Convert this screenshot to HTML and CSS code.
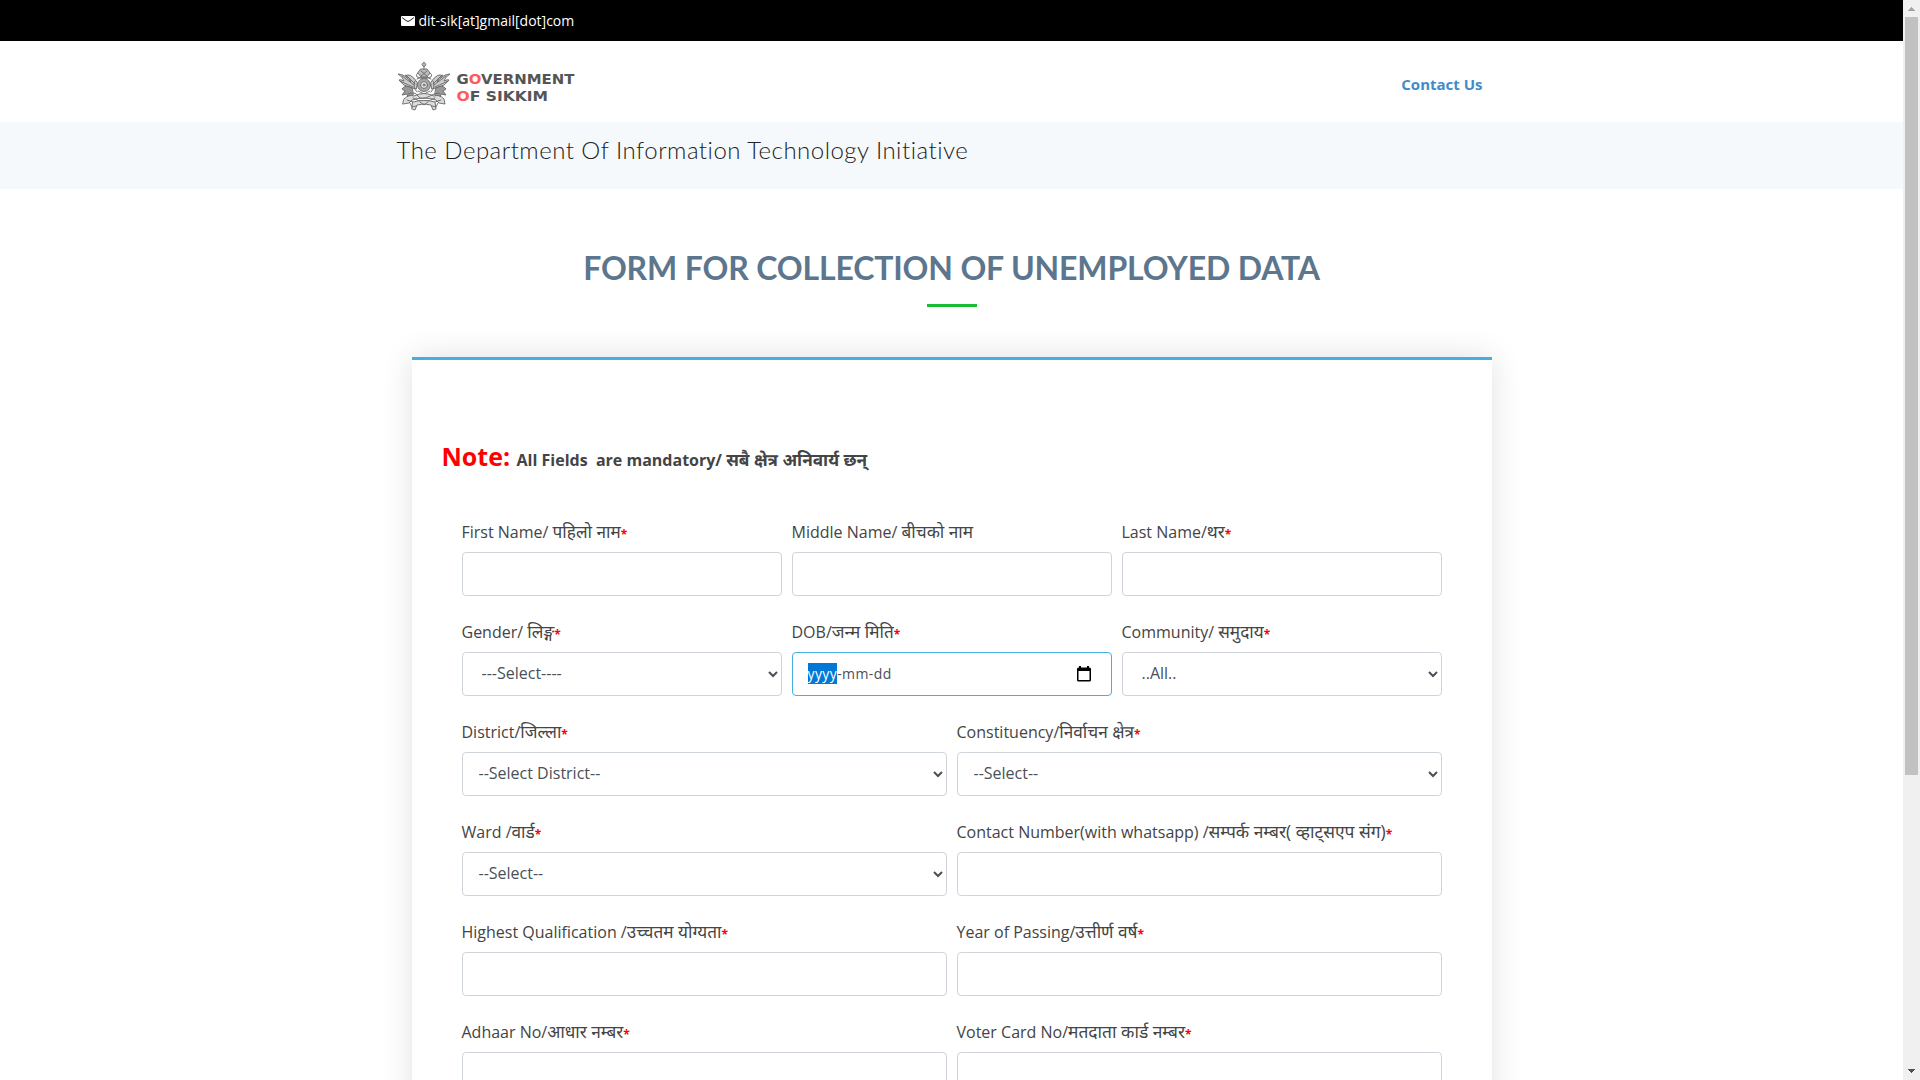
FILE: index.html
```
<!DOCTYPE html>
<html lang="en">
<head>
<meta charset="utf-8">
<title>Form for Collection of Unemployed Data</title>
<link rel="stylesheet" href="styles.css">
</head>
<body>
<div class="page">
  <div class="topbar"><div class="container topbar-inner">
    <svg class="mail" width="14" height="10" viewBox="0 0 14 10"><rect width="14" height="10" rx="1" fill="#fff"/><path d="M1 1.500Q6 5.500 7 5.500T13 1.500" fill="none" stroke="#222" stroke-width="1"/></svg>
    <span class="email">dit-sik[at]gmail[dot]com</span>
  </div></div>
  <header class="header"><div class="container header-inner">
    <svg class="logo" width="180" height="50" viewBox="0 0 180 50">
      <g fill="none" stroke="#666" stroke-width="0.9" stroke-linecap="round">
        <path fill="#bbb" d="M27 1.500a1.800 2 0 1 1-.1 0M27 5v3M24 8h6l3 4-3 4h-6l-3-4z"/>
        <path d="M21 12q-3 1-1 4l7 2 7-2q2-3-1-4M24 10l6 5M30 10l-6 5"/>
        <path fill="#ccc" d="M20 21Q13 11 8 15q5 1 6 6Q8 13 1 13q5 3 6 7-4-2-5-1 4 6 10 7l7 2z"/>
        <path fill="#ccc" d="M34 21q7-10 12-6-5 1-6 6 6-8 13-8-5 3-6 7 4-2 5-1-4 6-10 7l-7 2z"/>
        <path d="M5 15l12 9M9 14l9 9M3 20l13 6M49 15l-12 9M45 14l-9 9M51 20l-13 6"/>
        <circle cx="27" cy="24" r="6.500" fill="#aaa"/><circle cx="27" cy="24" r="3.500" fill="#ddd"/><circle cx="27" cy="24" r="1"/>
        <path d="M20 18q7-4 14 0M18 20q-3 6 2 11M36 20q3 6-2 11M21 30l6 3 6-3"/>
        <path fill="#999" d="M15 27q-7-4-10 1l3 2-3 4 5-1 1 4 5-3zM39 27q7-4 10 1l-3 2 3 4-5-1-1 4-5-3z"/>
        <path fill="#ddd" d="M7 38q5-5 10-3 10-5 20 0 5-2 10 3l1 5-6-1-3-3q-12-4-24 0l-3 3-6 1z"/>
        <path d="M11 33q7-3 10 2t12 0 10-2M10 39l6 2M44 39l-6 2M16 37q11 7 22 0"/>
        <path fill="#ddd" d="M16 41q11-3 22 0l1 7-3 1-2-5q-7-2-14 0l-2 5-3-1z"/>
        <path d="M13 42l2 4 4-1M41 42l-2 4-4-1M23 41l4 3 4-3"/>
      </g>
      <g class="logo-text" fill="#555">
        <text x="59.500" y="23" textLength="118" lengthAdjust="spacingAndGlyphs"><tspan>G</tspan><tspan fill="#ff5b5b">O</tspan><tspan>VERNMENT</tspan></text>
        <text x="59.500" y="40" textLength="91.500" lengthAdjust="spacingAndGlyphs"><tspan fill="#ff5b5b">O</tspan><tspan>F SIKKIM</tspan></text>
      </g>
    </svg>
    <a class="contact">Contact Us</a>
  </div></header>
  <div class="band"><div class="container"><h1 class="band-title">The Department Of Information Technology Initiative</h1></div></div>
  <main class="main">
    <h2 class="title">FORM FOR COLLECTION OF UNEMPLOYED DATA</h2>
    <div class="rule"></div>
    <form class="card">
      <p class="note"><span class="note-head">Note:</span><span>All Fields &nbsp;are mandatory/ <span class="ne">सबै क्षेत्र अनिवार्य छन्</span></span></p>
      <div class="row three">
        <div class="field"><label>First Name/ <span class="ne">पहिलो नाम</span><b>*</b></label><input class="control"></div>
        <div class="field"><label>Middle Name/ <span class="ne">बीचको नाम</span></label><input class="control"></div>
        <div class="field"><label>Last Name/<span class="ne">थर</span><b>*</b></label><input class="control"></div>
      </div>
      <div class="row three">
        <div class="field"><label>Gender/ <span class="ne">लिङ्ग</span><b>*</b></label><select class="control indented"><option>---Select----</option></select></div>
        <div class="field"><label>DOB/<span class="ne">जन्म मिति</span><b>*</b></label>
          <div class="control date"><span class="year">yyyy</span><span class="rest">-mm-dd</span>
            <svg class="calendar" width="14" height="16" viewBox="0 0 14 16"><path fill-rule="evenodd" d="M2 0h2v1.500h6V0h2v1.500h.5A1.500 1.500 0 0 1 14 3v11a1.500 1.500 0 0 1-1.500 1.500h-11A1.500 1.500 0 0 1 0 14V3a1.500 1.500 0 0 1 1.500-1.500H2zM1.500 5v9h11V5z"/></svg>
          </div></div>
        <div class="field"><label>Community/ <span class="ne">समुदाय</span><b>*</b></label><select class="control indented"><option>..All..</option></select></div>
      </div>
      <div class="row two">
        <div class="field"><label>District/<span class="ne">जिल्ला</span><b>*</b></label><select class="control"><option>--Select District--</option></select></div>
        <div class="field"><label>Constituency/<span class="ne">निर्वाचन क्षेत्र</span><b>*</b></label><select class="control"><option>--Select--</option></select></div>
      </div>
      <div class="row two">
        <div class="field"><label>Ward /<span class="ne">वार्ड</span><b>*</b></label><select class="control"><option>--Select--</option></select></div>
        <div class="field"><label>Contact Number(with whatsapp) /<span class="ne wide">सम्पर्क नम्बर( व्हाट्सएप संग)</span><b>*</b></label><input class="control"></div>
      </div>
      <div class="row two">
        <div class="field"><label>Highest Qualification /<span class="ne">उच्चतम योग्यता</span><b>*</b></label><input class="control"></div>
        <div class="field"><label>Year of Passing/<span class="ne">उत्तीर्ण वर्ष</span><b>*</b></label><input class="control"></div>
      </div>
      <div class="row two">
        <div class="field"><label>Adhaar No/<span class="ne">आधार नम्बर</span><b>*</b></label><input class="control"></div>
        <div class="field"><label>Voter Card No/<span class="ne wide">मतदाता कार्ड नम्बर</span><b>*</b></label><input class="control"></div>
      </div>
    </form>
  </main>
</div>
<div class="scrollbar">
  <svg width="17" height="17" viewBox="0 0 17 17" shape-rendering="crispEdges"><path d="M5 11h7L8.500 7z" fill="#a3a3a3"/></svg>
  <div class="thumb"></div>
  <svg width="17" height="17" viewBox="0 0 17 17" shape-rendering="crispEdges"><path d="M5 6h7L8.500 10z" fill="#505050"/></svg>
</div>
</body>
</html>
```
FILE: styles.css
```
* { box-sizing: border-box; }
body {
  margin: 0;
  display: flex;
  height: 1080px;
  overflow: hidden;
  background: #fff;
  color: #444;
  font: 16px/24px "Open Sans", "Noto Sans Devanagari", "Noto Sans", sans-serif;
}
.page { width: 1903px; height: 1080px; overflow: hidden; }
.container { width: 1140px; margin: 0 auto; padding: 0 15px; }
.topbar { height: 41px; background: #000; color: #fff; }
.topbar-inner { display: flex; align-items: center; height: 41px; gap: 4px; padding-left: 19px; }
.email { font-size: 14px; }
.header { height: 81px; }
.header-inner { display: flex; justify-content: space-between; align-items: flex-start; padding-top: 20px; }
.logo-text { font: bold 14.6px "DejaVu Sans", sans-serif; }
.contact { margin: 11px 24px 0 0; color: #428bca; font-size: 15px; font-weight: 700; }
.band { height: 67px; padding-top: 12px; background: #f5f9fc; }
.band-title { margin: 0; font: 300 24px/32px Lato, sans-serif; letter-spacing: 0.48px; color: #222; white-space: nowrap; }
.main { padding: 58px 0 0; }
.title { margin: 0; font: 700 32px/41px Lato, sans-serif; letter-spacing: -0.15px; color: #5c768d; text-align: center; white-space: nowrap; }
.rule { width: 50px; height: 3px; margin: 16px auto 0; background: #1bbd36; }
.card {
  width: 1080px;
  height: 900px;
  margin: 50px auto 0;
  padding: 80px 50px 0;
  border-top: 3px solid #47aee4;
  background: #fff;
  box-shadow: 0 0 30px rgba(0, 0, 0, 0.12);
}
.note { display: flex; align-items: baseline; gap: 6.5px; height: 80px; margin: 0 0 0 -20px; font-weight: 700; line-height: 32px; white-space: nowrap; }
.note-head { color: #f00; font-size: 25px; }
.ne { font-size: 17.2px; line-height: 0; }
.wide { font-size: 17.4px; }
.row { display: grid; column-gap: 10px; height: 100px; }
.three { grid-template-columns: repeat(3, 1fr); }
.two { grid-template-columns: repeat(2, 1fr); }
.field { min-width: 0; }
label { display: block; height: 32px; white-space: nowrap; }
label b { color: #f00; font-size: 12px; line-height: 0; vertical-align: -1px; }
.control {
  display: block;
  width: 100%;
  height: 44px;
  padding: 6px 12px;
  border: 1px solid #ced4da;
  border-radius: 4px;
  background: #fff;
  color: #495057;
  font: 16px/24px "Open Sans", sans-serif;
}
select.control { padding: 5px 13px 7px 12px; }
select.indented { padding-left: 15px; }
.date { display: flex; align-items: center; padding: 0 20px 1px 15px; border-color: #47aee4; font-size: 14px; line-height: 21px; letter-spacing: 0.4px; }
.year { background: #0078d7; color: #fff; }
.calendar { margin-left: auto; }
.scrollbar { display: flex; flex-direction: column; width: 17px; height: 1080px; background: #f0f0f0; }
.thumb { width: 13px; height: 758px; margin: 0 2px auto; background: #c1c1c1; }
```
